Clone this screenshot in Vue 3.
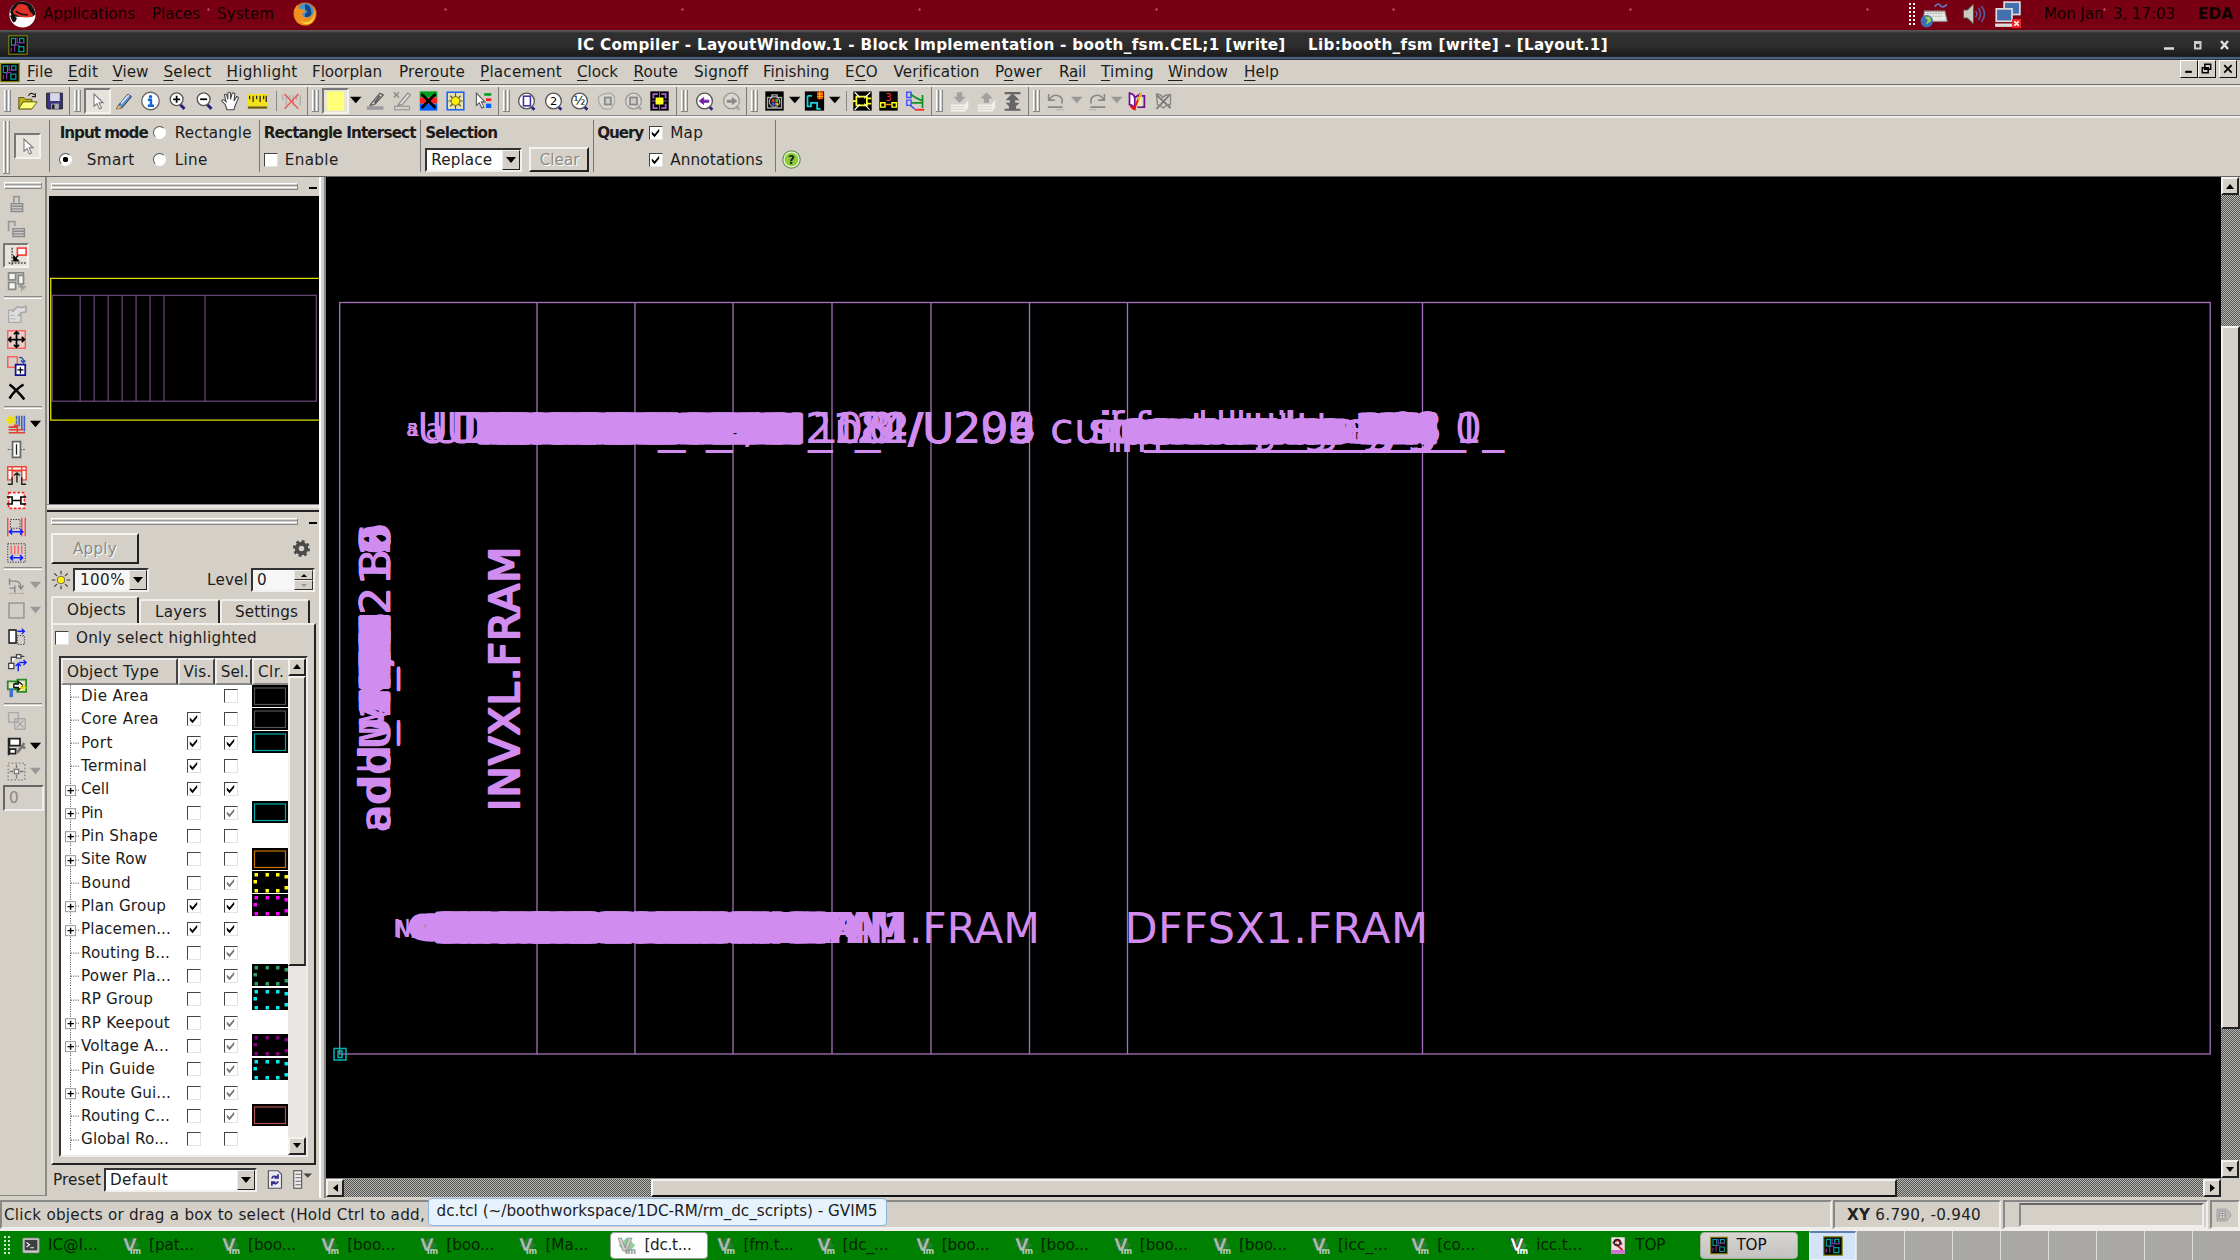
<script setup>
// Spreads the letters of a label so that it takes the given width.
const vFit = {
  mounted(el, { value }) {
    if (!value) return
    const natural = el.getBoundingClientRect().width
    el.style.letterSpacing = (value - natural) / el.textContent.length + 'px'
  },
}

const lens = '<path d="M15 16l5 5" stroke="#2a2080" stroke-width="3.4"/><circle cx="11" cy="10" r="7.3" fill="#fff" stroke="#555" stroke-width="1.5"/>'
const glass = '<path d="M17 18l4 4" stroke="#2a2080" stroke-width="3"/><circle cx="12" cy="12" r="9" fill="#fff" stroke="#555" stroke-width="1.5"/>'
const glassOff = '<path d="M17 18l4 4" stroke="#aaa" stroke-width="3"/><circle cx="12" cy="12" r="9" fill="#dcd9d2" stroke="#999" stroke-width="1.5"/>'
const chip = '<rect x="1" y="1" width="22" height="22" fill="#000" stroke="#84840a" stroke-width="1.4"/><path d="M4 4h5v8H4zM14 4h5v5h-5zM13 14h6v6h-6z" fill="none" stroke="#00a0a0" stroke-width="1.5"/><path d="M8 20v-8h6M11 3v6h9M4 20v-5" fill="none" stroke="#8030a0" stroke-width="1.5"/>'

const art = {
  chip,
  open: '<path d="M2 8h6l2 2h7v11H2z" fill="#b8b020" stroke="#555500"/><path d="M2 21l5-8h16l-6 8z" fill="#ffff80" stroke="#555500"/><path d="M13 6q3-5 7-1m1-2v4h-4" fill="none" stroke="#222" stroke-width="1.4"/>',
  save: '<path d="M3 3h18v18H4l-1-2z" fill="#3a3480" stroke="#111"/><rect x="7" y="3" width="11" height="9" fill="#d8d8e8"/><rect x="8" y="15" width="9" height="6" fill="#aaa"/><rect x="9" y="16" width="3" height="5" fill="#222"/>',
  arrow: '<path d="M8 4v14l3.4-3 2.8 6 2.4-1-2.8-6h4.6z" fill="#fff" stroke="#777" stroke-width="1.2"/>',
  pencil: '<path d="M5 17L16 4l4 3L9 20l-6 1z" fill="#5b8fd0" stroke="#222"/><path d="M8 15L17 5" stroke="#cfe2ff" stroke-width="2"/><path d="M3 21l2-4 4 3z" fill="#e8c060"/>',
  info: '<circle cx="12" cy="12" r="10" fill="#fff" stroke="#666" stroke-width="1.5"/><circle cx="12" cy="7" r="1.9" fill="#1168d8"/><path d="M9 10.500h3.500V17M9 17.500h7" fill="none" stroke="#1168d8" stroke-width="2.800"/>',
  zoomin: lens + '<path d="M7 10h8M11 6v8" stroke="#000" stroke-width="2"/>',
  zoomout: lens + '<path d="M7 10h8" stroke="#000" stroke-width="2"/>',
  hand: '<path d="M8 22l-2-6-4-4q1-3 4 0l1 1L5 5q2-2 3 1l1 4V3q2-2 3 0v7l2-7q2-1 3 1l-1 8 3-5q2 0 2 2l-4 9-1 4z" fill="#fff" stroke="#444" stroke-width="1.2"/>',
  ruler: '<rect x="1" y="4" width="22" height="14" fill="#f4e21a"/><path d="M1 19.500h22" stroke="#6b5d00" stroke-width="2.500"/><path d="M3 6v4M7 6v7M11 6v4M15 6v7M19 6v4M22 6v7" stroke="#222" stroke-width="1.4"/>',
  rulerx: '<path d="M2 5v6M6 5v12M10 5v6M14 5v12M18 5v6M22 5v12" stroke="#aaa" stroke-width="1.4"/><path d="M4 4l16 17M20 4L4 21" stroke="#f05050" stroke-width="1.6"/>',
  yellow: '<rect x="2" y="1" width="20" height="22" fill="#ffff78"/>',
  mark: '<rect x="2" y="18" width="19" height="4" fill="#999"/><path d="M7 15L17 3l4 2L11 16l-5 1z" fill="#ccc" stroke="#555" stroke-width="1.3"/><path d="M11 14l6-8" stroke="#555" stroke-width="2"/>',
  unmark: '<rect x="3" y="18" width="17" height="4" fill="none" stroke="#999" stroke-width="1.4"/><path d="M8 15L18 3l3 2L12 16l-5 1z" fill="#ddd" stroke="#888" stroke-width="1.3"/><path d="M2 2l6 6M8 2L2 8" stroke="#888" stroke-width="1.6"/>',
  rgb: '<rect x="2" y="1" width="20" height="7" fill="#00a020"/><rect x="2" y="8" width="20" height="7" fill="#ff2020"/><rect x="2" y="15" width="20" height="8" fill="#0060ff"/><path d="M4 4l16 16M20 4L4 20" stroke="#000" stroke-width="3"/>',
  sunbox: '<rect x="2.500" y="2" width="19" height="20" fill="#e8e4b0" stroke="#2060ff" stroke-width="1.8"/><path d="M12 3v18M4 12h16M6 6l12 12M18 6L6 18" stroke="#555" stroke-width="1.4"/><circle cx="12" cy="12" r="5" fill="#ffee10" stroke="#665500"/>',
  pick: '<path d="M14 3h8v3h-8z" fill="#00a020"/><path d="M16 9h6v3h-6z" fill="#ff2020"/><path d="M16 15h6v5h-6z" fill="#0060ff"/><path d="M5 3v14l3.400-3 2.800 6 2.400-1-2.800-6h4z" fill="#fff" stroke="#555" stroke-width="1.2"/>',
  gfit: glass + '<rect x="8.500" y="6.500" width="8" height="11" fill="#fff" stroke="#4030a0" stroke-width="1.800"/>',
  gtwo: glass + '<text x="12" y="17" font-size="13" text-anchor="middle" fill="#000">2</text>',
  ghalf: glass + '<text x="12" y="16.500" font-size="14" text-anchor="middle" fill="#000">½</text>',
  ghand: '<path d="M3 7q-1 9 6 14h8l4-7V7l-4-4-8 1z" fill="#dcd9d2" stroke="#aaa" stroke-width="1.500"/><rect x="10" y="8" width="7" height="8" fill="#ccc" stroke="#888" stroke-width="2"/>',
  gsel: glassOff + '<rect x="8" y="8" width="8" height="8" fill="#ccc" stroke="#888" stroke-width="2"/>',
  gfull: '<rect x="1.500" y="1" width="21" height="22" fill="#000"/><path d="M5 9V4h5M14 4h5v5M19 15v5h-5M10 20H5v-5" fill="none" stroke="#b060e0" stroke-width="2"/><path d="M12 2v20M3 12h18" stroke="#b060e0"/><rect x="7.500" y="8" width="9" height="8" fill="#ffff20"/>',
  gback: glass + '<path d="M6 12l5-4v3h6v2.500h-6V16z" fill="#7020a0" stroke="#7020a0"/>',
  gfwd: glassOff + '<path d="M18 12l-5-4v3H7v2.500h6V16z" fill="#888" stroke="#888"/>',
  cam: '<rect x="1.500" y="1" width="21" height="22" fill="#000"/><path d="M4 8h16v12H4zM9 5h6v3H9z" fill="none" stroke="#aaa" stroke-width="1.500"/><circle cx="12" cy="13" r="6" fill="#222" stroke="#ddd"/><path d="M9 10h3v3H9z" fill="#f33"/><path d="M13 10h3v3h-3z" fill="#3c3"/><path d="M9 14h3v3H9z" fill="#36f"/><path d="M13 14h3v3h-3z" fill="#fa0"/>',
  net: '<rect x="1" y="1" width="22" height="22" fill="#000"/><path d="M4 6v12h4v-4h7v7h4M4 6h5" fill="none" stroke="#10d8e0" stroke-width="2"/><rect x="15" y="1" width="7" height="9" fill="#e04000"/><path d="M15 4h7M15 7h7M18 1v9" stroke="#ffd000"/>',
  amp: '<rect x="1.500" y="1" width="21" height="22" fill="#000"/><path d="M5 7h12v10H5zM1 12h5M17 9h5M17 15h5" fill="none" stroke="#ffff20" stroke-width="2"/><path d="M3 2l6 6M21 2l-7 7M3 22l6-6M20 22l-6-7" stroke="#fff" stroke-width="1.300"/>',
  three: '<rect x="1.500" y="1" width="21" height="22" fill="#000"/><text x="12" y="12" font-size="11" text-anchor="middle" fill="#f33">3</text><path d="M3 14h5v5H3zM16 14h5v5h-5z" fill="none" stroke="#ffff20" stroke-width="1.600"/><path d="M8 16h8" stroke="#f90" stroke-width="1.600"/>',
  tree: '<path d="M6 4q8 6 15 8M7 14h13M20 5v15" fill="none" stroke="#109020" stroke-width="2"/><path d="M2 2h5v6H2zM2 11h5v6H2zM6 17l5 4" fill="none" stroke="#4050ff" stroke-width="1.600"/><path d="M11 22h11" stroke="#f22" stroke-width="2"/>',
  pushd: '<path d="M2 17h16l4-5M2 20h16l4-5M2 23h16l4-5" fill="none" stroke="#f4f2ee" stroke-width="1.800"/><path d="M9 2h6v5h4l-7 7-7-7h4z" fill="#a0a0a0"/>',
  pushu: '<path d="M2 17h16l4-5M2 20h16l4-5M2 23h16l4-5" fill="none" stroke="#f4f2ee" stroke-width="1.800"/><path d="M9 14h6V9h4l-7-7-7 7h4z" fill="#a0a0a0"/>',
  top: '<path d="M3 3h18M3 22h18" stroke="#666" stroke-width="2.500"/><path d="M12 3l8 8h-5v3h5l-4 4v3H8v-3l-4-4h5v-3H4z" fill="#666"/>',
  undo: '<path d="M3 4v7h7M4 10q4-6 10-4t4 9" fill="none" stroke="#888" stroke-width="1.800"/><path d="M2 19h17" stroke="#888" stroke-width="2"/><path d="M12 22h8" stroke="#999" stroke-dasharray="2 1"/>',
  redo: '<path d="M21 4v7h-7M20 10q-4-6-10-4t-4 9" fill="none" stroke="#888" stroke-width="1.800"/><path d="M5 19h17" stroke="#888" stroke-width="2"/><path d="M4 22h8" stroke="#999" stroke-dasharray="2 1"/>',
  book: '<path d="M4 3q5 1 6 5v12q-3-4-6-4z" fill="#fff" stroke="#701090" stroke-width="2"/><path d="M10 8l5-3v12M13 19h8V6h-3" fill="none" stroke="#701090" stroke-width="2"/><path d="M14 7h4v11h-5z" fill="#fff0a0"/><path d="M17 3L9 22M5 18l5 4" stroke="#f01010" stroke-width="2.200"/><path d="M17 3l-3 8" stroke="#e8c020" stroke-width="2"/>',
  nobook: '<path d="M4 5l16 15M20 4L4 21" stroke="#777" stroke-width="2"/><path d="M4 4q5 0 7 4 3-4 9-3v11q-5 0-8 4-3-3-7-4z" fill="none" stroke="#888" stroke-width="1.600"/>',
  lock: '<path d="M9 10V3h6v7" fill="none" stroke="#999" stroke-width="2"/><path d="M6 11h13v9H6zM7 14h12M7 17h12" fill="#ccc" stroke="#8a8a8a" stroke-width="1.600"/>',
  unlock: '<path d="M3 14V3h7v5" fill="none" stroke="#999" stroke-width="2"/><path d="M8 11h13v9H8zM8 14h13M8 17h13" fill="#ccc" stroke="#8a8a8a" stroke-width="1.600"/>',
  snap: '<path d="M7 3v20M3 20.500h20" stroke="#444" stroke-width="1.600" stroke-dasharray="2 1.500"/><rect x="13" y="3.500" width="10" height="8" fill="#fff" stroke="#f33" stroke-width="1.800"/><path d="M14 12l-3 3" stroke="#000" stroke-width="1.500"/><path d="M9 13v5h5z" fill="#000" stroke="#000" stroke-width="1.600"/>',
  tiles: '<path d="M3 2h8v8H3zM3 13h8v8H3zM14 5h6v10h-6z" fill="#f4f4f0" stroke="#888" stroke-width="2"/><path d="M2 2h18v3" fill="none" stroke="#888" stroke-width="1.500"/><path d="M18 14v9M14 18h9M15 15l6 6" stroke="#999" stroke-width="1.500"/>',
  wrench: '<path d="M3 7h14v14H3z" fill="#ddd" stroke="#aaa" stroke-width="1.500"/><path d="M7 9l6-6 4 1 6-1v6l-6 1-3 4" fill="#ddd" stroke="#aaa" stroke-width="2"/><path d="M5 13h5M5 17h6" stroke="#aaa"/>',
  move: '<rect x="2" y="2" width="20" height="20" fill="#e6cfc8" stroke="#f55" stroke-width="1.500"/><path d="M12 3v18M3 12h18M9 6l3-3 3 3M9 18l3 3 3-3M6 9l-3 3 3 3M18 9l3 3-3 3" fill="none" stroke="#000" stroke-width="2"/>',
  copy: '<rect x="2" y="2" width="11" height="12" fill="none" stroke="#f55" stroke-width="1.600"/><path d="M15 3q5-1 5 5M17 6l3 3 2-3" fill="none" stroke="#3050a0" stroke-width="1.600"/><rect x="11" y="11" width="11" height="12" fill="#fff" stroke="#111190" stroke-width="2"/><path d="M13 17h7M16.500 14v7" stroke="#000" stroke-width="1.500"/>',
  del: '<path d="M4 4q8 6 17 17M20 4Q10 10 4 20" fill="none" stroke="#000" stroke-width="2.800"/>',
  route: '<path d="M9 13h4v8M3 18h17M3 21.500h19M3 15h10" stroke="#e04030" stroke-width="1.800" fill="none"/><path d="M12 2v9M15 2v12M18 2v15M21 2v18" stroke="#4060c0" stroke-width="1.800"/><path d="M6 1v12M0 7h12M2 3l8 8M10 3l-8 8" stroke="#f0e000" stroke-width="2"/>',
  via: '<path d="M2 12h20" stroke="#444" stroke-dasharray="2 1.500"/><rect x="7.500" y="3" width="9" height="18" fill="#fff" stroke="#666" stroke-width="2"/><path d="M12 6v12" stroke="#222" stroke-width="1.500"/>',
  rise: '<path d="M2 2h21v15h-5V7H7v10H2zM2 6h21M7 2v15M18 2v15" fill="#fff" stroke="#e43" stroke-width="1.600"/><path d="M12.500 20V9M9 12l3.500-3 3.500 3M2 22h5v-8M23 22h-5v-8" fill="none" stroke="#222" stroke-width="1.600"/>',
  gap: '<rect x="3" y="3" width="18" height="18" fill="#fff" stroke="#f22" stroke-width="1.800" stroke-dasharray="3 2"/><path d="M1 8h6v8H1M23 8h-6v8h6M8 12h8" fill="none" stroke="#000" stroke-width="1.800"/>',
  span: '<path d="M2 2v21M22 2v21M18 2v21" stroke="#f44" stroke-width="1.600"/><rect x="5" y="4" width="11" height="10" fill="none" stroke="#222" stroke-dasharray="1.500 1.500"/><path d="M3 18h17M7 15l-3 3 3 3M16 15l3 3-3 3" fill="none" stroke="#1020ff" stroke-width="1.700"/>',
  span2: '<rect x="2" y="2" width="20" height="21" fill="none" stroke="#222" stroke-dasharray="1.500 1.500"/><path d="M6 4v10M10 4v10M14 4v10M18 4v10" stroke="#f66" stroke-width="1.600"/><path d="M5 18h14M8 15l-3 3 3 3M16 15l3 3-3 3" fill="none" stroke="#1020ff" stroke-width="1.700"/>',
  turn: '<path d="M4 7h7q6 0 6 8M14 12l3 4 3-4M4 15h7M4 4v7M10 12v8" fill="none" stroke="#888" stroke-width="1.600"/><path d="M4 21h17" stroke="#888" stroke-dasharray="1.500 1.500"/>',
  boxoff: '<rect x="3.500" y="3.500" width="17" height="17" fill="none" stroke="#999" stroke-width="1.800"/>',
  door: '<path d="M3.500 4.500h8v15h-8z" fill="#fff" stroke="#111" stroke-width="1.600"/><path d="M13 11h8v10h-8z" fill="none" stroke="#222" stroke-dasharray="1.500 1.500"/><path d="M13 6h8M18 3l3 3-3 3" fill="none" stroke="#1020ff" stroke-width="1.600"/>',
  hop: '<path d="M3 13h6v6H3zM12 3h5v4h-5zM6 13V6h6M17 5h4" fill="#fff" stroke="#444" stroke-width="1.500"/><path d="M14 22v-8M11 16l3-3 3 3M15 12h8M20 9l3 3-3 3" fill="none" stroke="#1020ff" stroke-width="1.600"/>',
  swap: '<path d="M2 5h9v9H2zM13 3h10v14H13z" fill="#e8e8c8" stroke="#2a8a2a" stroke-width="2"/><path d="M9 8h5V5l6 5-6 5v-3H9z" fill="#fff" stroke="#111" stroke-width="1.600"/><path d="M6 13v10" stroke="#4070d0" stroke-width="4"/><path d="M20 8v8M16 12h7" stroke="#f0e000" stroke-width="2"/>',
  group: '<path d="M3 3h11v11H3zM10 10h12v12H10z" fill="#d4d0c8" stroke="#aaa" stroke-width="1.600"/><path d="M12 12l8 8M20 12l-8 8" stroke="#aaa" stroke-width="1.400"/>',
  flag: '<path d="M3 2v20M4 3h12v8H4zM4 15h7v5H4z" fill="#fff" stroke="#222" stroke-width="2"/><path d="M21 8l-8 11M18 12l4 2" stroke="#777" stroke-width="3"/>',
  spread: '<rect x="2.500" y="2.500" width="19" height="19" fill="none" stroke="#888" stroke-width="1.500" stroke-dasharray="2 2"/><rect x="9.500" y="9.500" width="5" height="5" fill="#eee" stroke="#777" stroke-width="1.500"/><path d="M12 4v4M12 16v4M4 12h4M16 12h4" stroke="#777" stroke-width="1.500"/>',
  help: '<circle cx="12" cy="12" r="11" fill="#8ccc3c" stroke="#6b8a5a" stroke-width="1.500"/><circle cx="12" cy="12" r="9.400" fill="none" stroke="#e6f6d0" stroke-width="1.500"/><text x="12" y="17.500" font-size="15" font-weight="700" text-anchor="middle" fill="#222">?</text>',
  gear: '<circle cx="12" cy="12" r="6" fill="none" stroke="#4a4a4a" stroke-width="5"/><circle cx="12" cy="12" r="9.300" fill="none" stroke="#4a4a4a" stroke-width="3" stroke-dasharray="3.650 3.650"/>',
  sun: '<path d="M12 1v22M1 12h22M4 4l16 16M20 4L4 20" stroke="#333" stroke-width="1.300"/><circle cx="12" cy="12" r="7" fill="#d4d0c8"/><circle cx="12" cy="12" r="4.600" fill="#ffee10" stroke="#555"/>',
  reload: '<path d="M5 2h11l4 4v16H5z" fill="#e8eaf0" stroke="#555" stroke-width="1.300"/><path d="M9 11q1-4 6-2M16 6v4h-4M16 14q-1 4-6 2M9 19v-4h4" fill="none" stroke="#3a3090" stroke-width="2"/>',
  list: '<rect x="2" y="2" width="9" height="20" fill="#eee" stroke="#555" stroke-width="1.300"/><path d="M4 6h6M4 10h6M4 14h6M4 18h6" stroke="#555"/><path d="M13 5h10l-5 5z" fill="#444"/>',
  doc: '<path d="M2 4h13l6 8-6 8H2z" fill="#bbb" stroke="#999"/><path d="M5 7h8v10H5zM5 10h8M5 13h8M9 7v10" fill="#ddd" stroke="#888"/>',
  term: '<rect x="1" y="2" width="22" height="20" rx="1.500" fill="#ccc" stroke="#777"/><rect x="3.500" y="4.500" width="17" height="14" fill="#3c4040"/><path d="M6 8l4 3-4 3M11 15h5" fill="none" stroke="#eee" stroke-width="1.500"/>',
  vim: '<path d="M12 1l11 11-11 11L1 12z" fill="#1f7f30"/><text x="0" y="19" font-size="24" font-weight="700" fill="#a8bfa8" stroke="#305030" stroke-width=".6">V</text><text x="9" y="23" font-size="11" font-weight="700" fill="#b8c8b8">im</text>',
  vimw: '<path d="M12 1l11 11-11 11L1 12z" fill="#2c8f3a"/><text x="0" y="19" font-size="24" font-weight="700" fill="#fff" stroke="#111" stroke-width=".8">V</text><text x="9" y="23" font-size="11" font-weight="700" fill="#fff">im</text>',
  vima: '<path d="M12 1l11 11-11 11L1 12z" fill="#8fd09a"/><text x="0" y="19" font-size="24" font-weight="700" fill="#d0d0d0" stroke="#777" stroke-width=".8">V</text><text x="9" y="23" font-size="11" font-weight="700" fill="#999">im</text>',
  top1: '<rect x="3" y="1" width="18" height="22" fill="#f4dce8"/><path d="M3 18h18v5H3z" fill="#d070d0"/><path d="M9 10l9 8M5 9q8-9 12 2" fill="none" stroke="#d02020" stroke-width="2.500"/><circle cx="11" cy="8" r="4" fill="none" stroke="#222" stroke-width="2"/>',
  hat: '<circle cx="12" cy="12" r="11.600" fill="#fff"/><path d="M1 10Q3 0 12 .4 22 1 23.600 12q-3 3-9 2L3 14z" fill="#111"/><path d="M5 7l3-4q4-1 8 1l3 6q3 1 2 4-8 2-16-2-3-3 0-5z" fill="#e03028"/><path d="M6 9q5 4 11 3" fill="none" stroke="#111" stroke-width="1.300"/><path d="M1 13q1 4 3 6l2-1 1-3-4-3z" fill="#111"/>',
  fox: '<circle cx="12" cy="12" r="11.500" fill="#e87511"/><circle cx="12.500" cy="9.500" r="8.300" fill="#3f95d8"/><path d="M12 2q6 1 6 7 2 6-6 6-1-4 3-5-4-3-3-8z" fill="#16457f"/><path d="M1 8l3-5 3 4q6 0 5 3l-3 2q2 5 8 3 5-3 3-11 4 4 2.500 10-3 9-11 9Q1 22 1 8z" fill="#f0901e"/><path d="M21 6q2 9-4 13-6 3-10-1 3 5 9 4 8-4 5-16z" fill="#fbd33c"/>',
  kbd: '<path d="M13 5q3-4 5-1t6-1" fill="none" stroke="#6070c0" stroke-width="1.500"/><path d="M4 9h18l2 9H3z" fill="#e8e8e4" stroke="#999"/><path d="M6 11h15M6 13.500h15" stroke="#aaa" stroke-dasharray="1.500 1"/><circle cx="6" cy="18" r="5.500" fill="#3c6eb4"/><path d="M4 14l3 3-2 4 5-3-1-4z" fill="#9fcf50"/>',
  spk: '<path d="M2 8h4l6-6v20l-6-6H2z" fill="#c8ccc0" stroke="#555"/><path d="M14 9q3 3 0 6M17 6q4 6 0 12M20 4q6 8 0 16" fill="none" stroke="#5a5fa0" stroke-width="1.500"/>',
  pcs: '<rect x="9" y="1" width="14" height="11" fill="#4470b0" stroke="#ddd" stroke-width="1.500"/><rect x="2" y="7" width="14" height="11" fill="#4470b0" stroke="#ddd" stroke-width="1.500"/><path d="M1 20h16v3H1z" fill="#ddd"/><rect x="16" y="16" width="8" height="8" fill="#e22"/><path d="M18 18l4 4M22 18l-4 4" stroke="#fff" stroke-width="1.500"/>',
  dd: '<path d="M1 7h12l-6 7z" fill="#000"/>',
  ddoff: '<path d="M1 7h12l-6 7z" fill="#999"/>',
}

const menus = [
  ['', 'F', 'ile', 41, 26], ['', 'E', 'dit', 44.5, 30], ['', 'V', 'iew', 51, 36], ['', 'S', 'elect', 63, 48],
  ['', 'H', 'ighlight', 85.500, 71], ['F', 'l', 'oorplan', 87, 70], ['Prer', 'o', 'ute', 81, 66], ['', 'P', 'lacement', 97, 82],
  ['', 'C', 'lock', 56.500, 41], ['', 'R', 'oute', 60.500, 44.500], ['Sign', 'o', 'ff', 69, 54], ['Fi', 'n', 'ishing', 82, 66.500],
  ['E', 'C', 'O', 48.500, 33], ['Ver', 'i', 'fication', 101.500, 86], ['P', 'o', 'wer', 64, 47], ['R', 'a', 'il', 42, 27],
  ['', 'T', 'iming', 67, 53], ['', 'W', 'indow', 76, 60], ['', 'H', 'elp', 60, 35],
]

const groups = [
  { w: 70, items: ['open', 'save'] },
  { w: 238, items: ['*arrow', 'pencil', 'info', 'zoomin', 'zoomout', 'hand', 'ruler', '|', 'rulerx'] },
  { w: 191, items: ['*yellow', 'dd', 'mark', 'unmark', 'rgb', 'sunbox', 'pick'] },
  { w: 178, items: ['gfit', 'gtwo', 'ghalf', 'ghand', 'gsel', 'gfull'] },
  { w: 70, items: ['gback', 'gfwd'] },
  { w: 185, items: ['cam', 'dd', 'net', 'dd', '|', 'amp', 'three', 'tree'] },
  { w: 97, items: ['pushd', 'pushu', 'top'] },
  { w: 160, items: ['undo', 'ddoff', 'redo', 'ddoff', 'book', 'nobook'] },
]
const name = (s) => s.replace('*', '')

const side = [
  ['lock'], ['unlock'], ['snap', '', true], ['tiles'], ['-'], ['wrench'], ['move'], ['copy'], ['del'], ['-'],
  ['route', 'dd'], ['via'], ['rise'], ['gap'], ['span'], ['span2'], ['-'], ['turn', 'ddoff'], ['boxoff', 'ddoff'],
  ['door'], ['hop'], ['swap'], ['-'], ['group'], ['flag', 'dd'], ['spread', 'ddoff'],
]

// name, width, expandable, visible, selectable (0 off, 1 on, 2 grey, null none), swatch colour, dotted swatch
const rows = [
  ['Die Area', 68, 0, null, 0, '#555'], ['Core Area', 78, 0, 1, 0, '#555'], ['Port', 32, 0, 1, 1, '#0aa'],
  ['Terminal', 66, 0, 1, 0], ['Cell', 28, 1, 1, 1], ['Pin', 22, 1, 0, 2, '#0aa'], ['Pin Shape', 77, 1, 0, 0],
  ['Site Row', 66, 1, 0, 0, '#c87800'], ['Bound', 50, 0, 0, 2, '#ff0', 1], ['Plan Group', 85, 1, 1, 1, '#f0f', 1],
  ['Placemen...', 90, 1, 1, 1], ['Routing B...', 89, 0, 0, 2], ['Power Pla...', 90, 0, 0, 2, '#2e9e60', 1],
  ['RP Group', 72, 0, 0, 0, '#0ee', 1], ['RP Keepout', 89, 1, 0, 2], ['Voltage A...', 88, 1, 0, 2, '#800080', 1],
  ['Pin Guide', 74, 0, 0, 2, '#0ee', 1], ['Route Gui...', 90, 1, 0, 2], ['Routing C...', 89, 0, 0, 2, '#b05050'],
  ['Global Ro...', 88, 0, 0, 0],
]
const dots = [[3, 3], [14, 3], [24.500, 3], [33, 5], [2, 10], [33, 16], [3, 19], [14, 19], [24.500, 19]]

const tasks = [
  ['[pat...', 'vim', 45], ['[boo...', 'vim', 48], ['[boo...', 'vim', 48], ['[boo...', 'vim', 48], ['[Ma...', 'vim', 43],
  ['[dc.t...', 'vima', 47, 'on'], ['[fm.t...', 'vim', 50], ['[dc_...', 'vim', 46], ['[boo...', 'vim', 48],
  ['[boo...', 'vim', 48], ['[boo...', 'vim', 48], ['[boo...', 'vim', 48], ['[icc_...', 'vim', 50], ['[co...', 'vim', 38],
  ['icc.t...', 'vimw', 46], ['TOP', 'top1', 30], ['TOP', 'chip', 30, 'sel'],
]

const cellEdges = [537, 635, 733, 832, 931, 1029.500, 1127.500, 1422.500]
const navEdges = [80, 94, 108, 122, 136, 150, 164, 205]

// Instance and reference names, piled up where the cells share one origin.
// put: one name from x1 to x2. pile: the dense part, drawn with heavy strokes.
const labels = []
const put = (x, x2, t, y = 443, s = 43) => labels.push({ x, y, t, s, l: x2 ? x2 - x : null })
const pile = (x, x2, t, y = 441.500, s = 38) => labels.push({ x, y, t, s, l: x2 - x, heavy: 1 })

put(406, 420, 'a1', 436, 17)
put(407, 421, 'B', 436, 17)
put(417, 0, 'U')
put(431, 0, 'U')
put(425, 0, 'a', 440, 30)
put(446, 0, 'U')
put(452, 0, 'DN')
put(462, 0, 'DP')
pile(478, 804, 'NBMEHBNMEBHN')
pile(484, 800, 'MHBENMBHNEMB')
pile(476, 680, 'HNMBEHMB')
pile(490, 660, 'EBHMNEH')
pile(660, 802, 'NMHBN')
put(658, 0, '_')
put(664, 0, '_')
put(706, 0, '_')
put(711, 0, '_')
put(745, 0, '/')
put(808, 0, '_')
put(811, 0, '_')
put(805, 0, '2')
put(811, 0, '1')
put(832, 0, '1')
put(834, 0, 'n')
put(836, 0, '0')
put(855, 0, '_')
put(859, 0, '_')
put(856, 0, '2')
put(860, 0, '8')
put(863, 0, 'B')
put(868, 0, '0')
put(881, 1036, '4/U294')
put(880, 1035, '4/U200')
put(881, 1036, '4/U298')
put(883, 1034, '2/U295')
put(1008, 0, '6')

put(1050, 1504, 'current_state_reg_0_')
put(1050, 1504, 'current_state_reg_1_')
put(1088, 1440, 'sineu_reg_state_8')
put(1098, 1440, 'ipeproduct_areg06')
put(1101, 1441, 'ifpwo_load_areg38')
put(1112, 1442, 'pfemuotpicane_y_8')
put(1122, 1440, 'piroduct_dagaa_38')
put(1092, 1436, 'sumeu_laten_aaeg')
put(1136, 1438, 'pwounusagaeyreg')
pile(1124, 1345, 'aewmaswea', 441.500, 38)
pile(1150, 1345, 'ewaenmaw', 441.500, 38)
pile(1358, 1438, 'BMH')
pile(1364, 1434, 'HBN')
put(1144, 1466, '_______________')

put(393, 437, 'NAM', 937, 24)
put(395, 440, 'MX', 938, 25)
pile(410, 470, 'OMO', 938, 30)
pile(414, 470, 'GNG', 939, 32)
pile(440, 832, 'NBMEHBNMEBHNMB', 941, 38)
pile(446, 828, 'MHBENMBHNEMBHN', 941, 38)
pile(438, 780, 'HNMBEHMBHNEB', 941, 38)
pile(434, 720, 'EBHMNEHBNEM', 941, 38)
put(740, 905, 'NX1.FRAM', 943, 42.500)
put(738, 890, 'X1.FRAM', 943, 42.500)
put(746, 872, 'HFRAMI', 943, 42.500)
put(750, 856, 'MFRAM', 943, 42.500)
put(760, 908, 'AOI.FRAM', 943, 42.500)
put(882, 1040, '1.FRAM', 943, 42.500)
put(1124.500, 1428, 'DFFSX1.FRAM', 943, 43)

const upright = []
const up = (y, y2, t, heavy) => upright.push({ y, l: y2 ? y - y2 : null, t, heavy })
up(832, 528, 'add_1_/U212')
up(831, 527, 'sdd_4_/U218')
up(833, 528, 'adb_1_/U216')
up(830, 527, 'add_4_/U210')
up(750, 700, 'UM')
up(748, 700, 'UW')
up(704, 614, 'NBM', 1)
up(690, 614, 'MHB', 1)
up(668, 614, 'BN', 1)
up(577, 0, '8')
up(578, 0, 'B')
up(551, 0, '0')
up(550, 0, '6')
</script>

<template>
  <div class="desk">
    <header class="panel">
      <svg class="hat" viewBox="0 0 24 24" v-html="art.hat"></svg>
      <span class="apps"><span v-fit="92">Applications</span></span>
      <span class="places"><span v-fit="48">Places</span></span>
      <span class="system"><span v-fit="57">System</span></span>
      <svg class="fox" viewBox="0 0 24 24" v-html="art.fox"></svg>
      <div class="grow"></div>
      <i class="grip"></i>
      <svg class="tray kb" viewBox="0 0 24 24" v-html="art.kbd"></svg>
      <svg class="tray sp" viewBox="0 0 24 24" v-html="art.spk"></svg>
      <svg class="tray pc" viewBox="0 0 24 24" v-html="art.pcs"></svg>
      <span class="clock"><span v-fit="131">Mon Jan&nbsp; 3, 17:03</span></span>
      <b class="user"><span v-fit="35">EDA</span></b>
    </header>

    <div class="title">
      <svg class="ico" viewBox="0 0 24 24" v-html="art.chip"></svg>
      <b class="cap"><span v-fit="1031">IC Compiler - LayoutWindow.1 - Block Implementation - booth_fsm.CEL;1 [write]&nbsp;&nbsp;&nbsp; Lib:booth_fsm [write] - [Layout.1]</span></b>
      <svg class="wm" viewBox="0 0 76 29"><path d="M4 17.500h10" stroke="#ddd" stroke-width="2.500" /><path d="M35 11h5.500v6.500H35zM35 12h5" fill="none" stroke="#ccc" stroke-width="2" /><path d="M61 10l7 8M68 10l-7 8" stroke="#ddd" stroke-width="2.500" /></svg>
    </div>

    <nav class="menu">
      <svg class="ico" viewBox="0 0 24 24" v-html="art.chip"></svg>
      <span v-for="(m, i) in menus" :key="i" class="mi" :style="{ width: m[3] + 'px' }"><span v-fit="m[4]">{{ m[0] }}<u>{{ m[1] }}</u>{{ m[2] }}</span></span>
      <div class="grow"></div>
      <i class="mdi"><svg viewBox="0 0 18 18"><path d="M5 13h8" stroke="#000" stroke-width="2.500" /></svg></i>
      <i class="mdi"><svg viewBox="0 0 18 18"><path d="M7 4h7v6h-7zM4 8h7v6H4z" fill="#d4d0c8" stroke="#000" stroke-width="1.800" /></svg></i>
      <i class="mdi last"><svg viewBox="0 0 18 18"><path d="M5 5l9 9M14 5l-9 9" stroke="#000" stroke-width="2" /></svg></i>
    </nav>

    <div class="tools">
      <div v-for="(g, i) in groups" :key="i" class="tg" :style="{ width: g.w + 'px' }">
        <i class="hd"></i>
        <template v-for="(it, j) in g.items" :key="j">
          <i v-if="it === '|'" class="vs"></i>
          <svg v-else-if="it.startsWith('dd')" class="dd" viewBox="0 0 14 22" v-html="art[it]"></svg>
          <span v-else class="tb" :class="{ down: it[0] === '*' }"><svg viewBox="0 0 24 24" v-html="art[name(it)]"></svg></span>
        </template>
      </div>
    </div>

    <div class="opts">
      <i class="hd tall"></i>
      <span class="tb down big"><svg viewBox="0 0 24 24" v-html="art.arrow"></svg></span>
      <div class="col c1">
        <div class="ln"><b v-fit="88">Input mode</b></div>
        <div class="ln"><i class="radio on"></i><span v-fit="48">Smart</span></div>
      </div>
      <div class="col c2">
        <div class="ln"><i class="radio"></i><span v-fit="77">Rectangle</span></div>
        <div class="ln"><i class="radio"></i><span v-fit="33">Line</span></div>
      </div>
      <div class="col c3">
        <div class="ln"><b v-fit="152">Rectangle Intersect</b></div>
        <div class="ln"><i class="cb"></i><span v-fit="54">Enable</span></div>
      </div>
      <div class="col c4">
        <div class="ln"><b v-fit="72">Selection</b></div>
        <div class="ln"><div class="combo rep"><span v-fit="61">Replace</span><i class="dn"></i></div><div class="btn clr"><span v-fit="40">Clear</span></div></div>
      </div>
      <div class="col c5">
        <div class="ln"><b v-fit="46">Query</b></div>
      </div>
      <div class="col c6">
        <div class="ln"><i class="cb"><svg viewBox="0 0 14 14"><path d="M3 6l3 3 5-6v3l-5 6-3-3z" /></svg></i><span v-fit="33">Map</span></div>
        <div class="ln"><i class="cb"><svg viewBox="0 0 14 14"><path d="M3 6l3 3 5-6v3l-5 6-3-3z" /></svg></i><span v-fit="93">Annotations</span></div>
      </div>
      <div class="col c7">
        <div class="ln"></div>
        <div class="ln"><svg class="help" viewBox="0 0 24 24" v-html="art.help"></svg></div>
      </div>
    </div>

    <div class="main">
      <aside class="side">
        <i class="hh sh"></i>
        <template v-for="(s, i) in side" :key="i">
          <i v-if="s[0] === '-'" class="hs"></i>
          <div v-else class="sb">
            <span :class="{ down: s[2] }"><svg viewBox="0 0 24 24" v-html="art[s[0]]"></svg></span>
            <svg v-if="s[1]" class="dd" viewBox="0 0 14 22" v-html="art[s[1]]"></svg>
          </div>
        </template>
        <div class="zero">0</div>
      </aside>

      <section class="dock">
        <div class="dh"><i class="hh"></i><i class="min"></i></div>
        <svg class="nav" viewBox="49 196 270 308">
          <g fill="none" stroke="#6c487c" stroke-width="1.200">
            <rect x="52" y="295.500" width="264.500" height="106" />
            <path v-for="x in navEdges" :key="x" :d="`M${x} 296V402`" />
          </g>
          <path d="M319 278.500H50.500V420.500H319" fill="none" stroke="#dede00" stroke-width="1.300" />
        </svg>
        <i class="split"></i>
        <div class="dh second"><i class="hh"></i><i class="min"></i></div>
        <div class="r1"><div class="btn apply"><span v-fit="44">Apply</span></div><svg class="gear" viewBox="0 0 24 24" v-html="art.gear"></svg></div>
        <div class="r2">
          <svg class="sun" viewBox="0 0 24 24" v-html="art.sun"></svg>
          <div class="combo pct"><span v-fit="45">100%</span><i class="dn"></i></div>
          <span class="lv"><span v-fit="41">Level</span></span>
          <div class="combo spin"><span>0</span><em><i></i><i></i></em></div>
        </div>
        <div class="tabs">
          <div class="tab t1"><span v-fit="59">Objects</span></div>
          <div class="tab t2"><span v-fit="52">Layers</span></div>
          <div class="tab t3"><span v-fit="63">Settings</span></div>
        </div>
        <div class="page">
          <div class="only"><i class="cb"></i><span v-fit="181">Only select highlighted</span></div>
          <div class="table">
            <div class="tbl">
              <div class="th"><span class="a"><span v-fit="92">Object Type</span></span><span class="b"><span v-fit="28">Vis.</span></span><span class="b"><span v-fit="28">Sel.</span></span><span class="d"><span v-fit="26">Clr.</span></span></div>
              <div class="body">
                <div v-for="(r, i) in rows" :key="i" class="tr">
                  <span class="tw"><svg viewBox="0 0 20 23"><path d="M9.500 0V23M10 12h8" stroke="#444" stroke-dasharray="1 1.300" /><g v-if="r[2]"><rect x="4.500" y="7.500" width="10" height="10" fill="#fff" stroke="#999" /><path d="M6.500 12.500h6.400M9.600 9.500v6.200" stroke="#000" stroke-width="1.400" /></g></svg></span>
                  <span class="nm"><span v-fit="r[1]">{{ r[0] }}</span></span>
                  <span v-for="k in [3, 4]" :key="k" class="ck"><i v-if="r[k] !== null" class="cb"><svg v-if="r[k]" viewBox="0 0 14 14" :class="{ grey: r[k] === 2 }"><path d="M3 6l3 3 5-6v3l-5 6-3-3z" /></svg></i></span>
                  <span class="sw"><svg v-if="r[5]" viewBox="0 0 36 23">
                    <rect width="36" height="22" fill="#000" />
                    <template v-if="r[6]"><rect v-for="(d, j) in dots" :key="j" :x="d[0] - 0.500" :y="d[1] - 1" width="3.500" height="3.500" :fill="r[5]" /></template>
                    <rect v-else x="2.500" y="3" width="31" height="16.500" fill="none" :stroke="r[5]" stroke-width="1.200" />
                  </svg></span>
                </div>
              </div>
            </div>
            <div class="vbar"><i class="ar up"></i><i class="thumb"></i><i class="rest"></i><i class="ar"></i></div>
          </div>
        </div>
        <div class="preset"><span class="pl"><span v-fit="48">Preset</span></span><div class="combo def"><span v-fit="58">Default</span><i class="dn"></i></div><svg class="p1" viewBox="0 0 24 24" v-html="art.reload"></svg><svg class="p2" viewBox="0 0 24 24" v-html="art.list"></svg></div>
      </section>

      <section class="view">
        <div class="vrow">
          <svg class="canvas" viewBox="326 177 1895 1001">
            <g fill="none" stroke="#a571bb" stroke-width="1.300">
              <rect x="339.700" y="302.500" width="1870.500" height="751.500" />
              <path v-for="x in cellEdges" :key="x" :d="`M${x} 302V1054`" />
            </g>
            <g class="names">
              <text v-for="(l, i) in labels" :key="i" :x="l.x" :y="l.y" :font-size="l.s" :textLength="l.l" lengthAdjust="spacing" :class="{ heavy: l.heavy }">{{ l.t }}</text>
              <text v-for="(l, i) in upright" :key="'u' + i" :font-size="l.heavy ? 38 : 43" :textLength="l.l" :class="{ heavy: l.heavy }" :transform="`translate(${l.heavy ? 387.5 : 389.5} ${l.y}) rotate(-90)`">{{ l.t }}</text>
              <text class="semi" font-size="41.500" textLength="264" transform="translate(518.500 811) rotate(-90)">INVXL.FRAM</text>
            </g>
            <g fill="none" stroke="#00b4b4" stroke-width="1.500"><rect x="334" y="1048.500" width="12" height="11.500" /><rect x="338" y="1051" width="4" height="6.500" /></g>
          </svg>
          <div class="vs2"><i class="ar up"></i><i class="t0"></i><i class="th2"></i><i class="t1b"></i><i class="ar"></i></div>
        </div>
        <div class="hs2"><i class="ar lf"></i><i class="h0"></i><i class="hth"></i><i class="h1"></i><i class="ar rt"></i></div>
      </section>
    </div>

    <div class="status">
      <div class="s1"><span v-fit="421">Click objects or drag a box to select (Hold Ctrl to add,</span> S</div>
      <div class="s2"><span v-fit="134"><b>XY</b> 6.790, -0.940</span></div>
      <div class="s3"><i></i></div>
      <div class="s4"><svg viewBox="0 0 24 24" v-html="art.doc"></svg></div>
      <div class="tip"><span v-fit="441">dc.tcl (~/boothworkspace/1DC-RM/rm_dc_scripts) - GVIM5</span></div>
    </div>

    <footer class="tasks">
      <i class="grip"></i>
      <div class="task first"><svg viewBox="0 0 24 24" v-html="art.term"></svg><span v-fit="50">IC@I...</span></div>
      <div v-for="(t, i) in tasks" :key="i" class="task" :class="t[3]"><svg viewBox="0 0 24 24" v-html="art[t[1]]"></svg><span v-fit="t[2]">{{ t[0] }}</span></div>
      <div class="ws"><span class="act"><svg viewBox="0 0 24 24" v-html="art.chip"></svg></span><span v-for="n in 8" :key="n"></span></div>
    </footer>
  </div>
</template>

<style>
body { background: #d4d0c8; overflow: hidden; }
svg { display: block; overflow: visible; }
</style>

<style scoped>
.desk { width: 2240px; height: 1260px; display: flex; flex-direction: column; background: #d4d0c8; font: 15.2px/20px "DejaVu Sans", sans-serif; color: #1c1c1c; white-space: nowrap; overflow: hidden; }
.desk * { box-sizing: border-box; }
i { display: block; font-style: normal; flex: none; }
svg { flex: none; }
.grow { flex: 1; }
.panel { height: 30px; flex: none; display: flex; align-items: center; color: #100; background-color: #780012; background-image: radial-gradient(circle, #c04060 1px, transparent 1.5px), radial-gradient(circle, #b04058 1px, transparent 1.5px); background-size: 173px 61px, 237px 47px; background-position: 20px 2px, 90px -14px; padding-bottom: 2px; }
.hat { width: 27px; height: 27px; margin-left: 9px; }
.apps { margin-left: 7px; width: 109px; }
.places { width: 65px; }
.system { width: 76px; }
.fox { width: 24px; height: 24px; margin-top: -1px; }
.grip { width: 6px; height: 22px; background: repeating-linear-gradient(#fff 0 2px, transparent 2px 4px); -webkit-mask: linear-gradient(90deg, #000 2px, transparent 2px 4px, #000 4px); }
.tray { width: 27px; height: 27px; }
.kb { margin-left: 5px; }
.sp { margin-left: 13px; height: 24px; }
.pc { margin-left: 7px; }
.clock { margin-left: 23px; width: 154px; }
.user { width: 42px; }
.title { height: 30px; flex: none; display: flex; align-items: center; background: linear-gradient(#555 0, #555 1px, #303030 3px, #2e2e2e 50%, #1a1a1a 88%, #4a6488 92%, #4a6488 96%, #333 97%); color: #fff; }
.title .ico { width: 20px; height: 20px; margin-left: 8px; }
.cap { width: 1031px; margin-left: 549px; }
.wm { width: 76px; height: 29px; margin-left: 552px; }
.menu { height: 25px; flex: none; display: flex; align-items: flex-start; border-bottom: 1px solid #6e6c68; }
.menu .ico { width: 20px; height: 21px; margin-right: 7px; margin-top: 2px; }
.mi { padding-top: 1.5px; flex: none; }
.mi u { text-underline-offset: 3px; }
.mdi { width: 18px; height: 18px; border: 1.5px solid; border-color: #fff #111 #111 #fff; }
.mdi.last { margin: 0 3px 0 3px; }
.mdi svg { width: 15px; height: 15px; }
.tools { height: 31px; flex: none; display: flex; border-top: 2px solid #eceae6; border-bottom: 1px solid #888; }
.tg { flex: none; display: flex; align-items: center; border-right: 1.5px solid #7c7a76; padding: 0 0 1px 4px; height: 28px; overflow: hidden; }
.tg:last-child { border-right: 0; }
.hd { width: 7px; height: 22px; margin-right: 3px; border: solid #888; border-width: 0 1px 1px 0; background: linear-gradient(90deg, #fff 0 1px, #d4d0c8 1px 2px, #888 2px 3px, #fff 4px 5px, #d4d0c8 5px); }
.tb { width: 26.7px; height: 26px; flex: none; display: flex; align-items: center; justify-content: center; }
.tb svg { width: 21px; height: 22px; }
.down { background: #e6e3dd; border: 2px solid; border-color: #777 #f4f2ee #f4f2ee #777; }
.dd { width: 13.5px; height: 21px; }
.vs { width: 6px; height: 20px; border-right: 1px solid #888; margin-right: 1.5px; }
.opts { height: 61px; flex: none; display: flex; border-top: 2px solid #f0eeea; border-bottom: 1.5px solid #666; padding: 0 0 0 3px; }
.hd.tall { height: 53px; margin: 3px 4px 0 0; }
.big { margin-top: 15px; }
.col { flex: none; margin-top: 2px; height: 52px; }
.ln { height: 27px; display: flex; align-items: center; margin-top: -1px; }
.ln + .ln { margin-top: 0; }
.c1 { width: 104px; border-left: 1px solid #777; margin-left: 8px; padding-left: 10px; }
.c1 .radio { margin-right: 15px; margin-left: -1px; }
.c2 { width: 106px; }
.radio { width: 13px; height: 13px; border-radius: 50%; background: #fff; border: 1.5px solid; border-color: #555 #fff #fff #555; margin-right: 9px; }
.radio.on { background: radial-gradient(circle, #000 2.5px, #fff 3px); }
.c3, .c4, .c5, .c7 { border-left: 1px solid #777; padding-left: 4px; }
.c3 { width: 161.5px; }
.c3 .cb { margin-right: 6px; }
.c4 { width: 173px; }
.c5 { width: 55px; padding-left: 3px; }
.c6 { width: 127px; }
.c7 { padding-left: 6px; }
.cb { width: 14px; height: 14px; background: #fff; border: 1.5px solid; border-color: #444 #e4e2dc #e4e2dc #444; }
.cb svg { width: 13px; height: 13px; margin-left: -1px; margin-top: -1px; }
.cb .grey { fill: #777; }
.ln .cb { margin-right: 7px; }
.c6 .cb { margin-left: 1px; }
.help { width: 19px; height: 21px; }
.combo { display: flex; align-items: center; height: 24px; background: #fff; border: 2px solid; border-color: #333 #f2f0ec #f2f0ec #333; padding-left: 4px; flex: none; }
.combo > span { flex: none; }
.combo .dn { width: 18px; height: 20px; background: #d4d0c8; border: 1.5px solid; border-color: #eee #222 #222 #eee; display: flex; align-items: center; justify-content: center; margin-left: auto; }
.dn::before { content: ""; border: 5px solid transparent; border-top: 6px solid #000; border-bottom: 0; }
.btn { border: 2px solid; border-color: #f4f2ee #222 #222 #f4f2ee; display: flex; align-items: center; justify-content: center; color: #8c8a86; text-shadow: 1px 1px #fff; flex: none; }
.rep { width: 97px; }
.clr { width: 60px; height: 25px; margin-left: 6.5px; padding-left: 2px; }
.main { height: 1021px; flex: none; display: flex; }
.side { width: 47px; flex: none; height: 1019px; border-right: 2px solid #8c8a85; border-bottom: 1.5px solid #8c8a85; padding: 5px 0 0 3px; }
.hh { height: 7px; border: 1px solid; border-color: #fff #888 #888 #fff; background: linear-gradient(#d4d0c8 0 1px, #999 1px 2px, #fff 3px 4px, #d4d0c8 4px); }
.sh { width: 38px; margin: 0 0 2.5px 1px; }
.sb { height: 25.65px; display: flex; align-items: center; }
.sb > span { width: 26px; height: 25px; display: flex; align-items: center; justify-content: center; }
.sb > span svg { width: 21px; height: 21px; }
.sb .dd { width: 13px; }
.hs { width: 38px; height: 3px; margin: 2.3px 0 2px 1px; border-top: 1.5px solid #888; border-bottom: 1px solid #fff; }
.zero { width: 41px; height: 26px; border: 2px solid; border-color: #666 #eee #eee #666; color: #888; padding-left: 4px; line-height: 22px; }
.dock { width: 279px; flex: none; height: 1021px; border-right: 2px solid #888; box-shadow: inset -3px 0 #d4d0c8, inset -5px 0 #fff; padding-left: 2px; }
.dh { display: flex; height: 19px; padding: 6px 0 0 2px; }
.dh .hh { width: 247px; }
.min { width: 8px; height: 2px; background: #000; margin: 4px 0 0 11px; }
.nav { width: 270px; height: 307.5px; background: #000; overflow: hidden; }
.split { height: 8px; margin: 0 5px 0 -2px; border-top: 1px solid #888; border-bottom: 2px solid #222; box-shadow: inset 0 3px #e8e6e2; }
.second { height: 20.5px; padding-top: 6px; }
.r1 { display: flex; height: 33px; align-items: center; padding-left: 2px; }
.apply { width: 88px; height: 31px; }
.gear { width: 19px; height: 19px; margin-left: 153px; }
.r2 { display: flex; height: 30px; align-items: center; padding-left: 2px; }
.sun { width: 20px; height: 20px; }
.pct { width: 76px; margin-left: 2px; padding-left: 5px; background: #f6f6f6; }
.lv { margin-left: 58px; width: 44px; }
.spin { width: 64px; background: #f6f6f6; }
.spin em { margin-left: auto; width: 19px; height: 20px; }
.spin em i { height: 10px; background: #d4d0c8; border: 1.5px solid; border-color: #eee #333 #333 #eee; display: flex; align-items: center; justify-content: center; }
.spin em i::before { content: ""; border: 3px solid transparent; border-bottom: 3px solid #000; border-top: 0; }
.spin em i + i::before { border: 3px solid transparent; border-top: 3px solid #999; border-bottom: 0; }
.tabs { display: flex; align-items: flex-end; height: 28px; padding-left: 2px; }
.tab { height: 24px; border: 2px solid; border-color: #f2f0ec #222 transparent #f2f0ec; border-bottom: 0; border-radius: 3px 3px 0 0; line-height: 22px; padding-left: 14px; }
.t1 { width: 88px; height: 27px; line-height: 24px; }
.t2 { width: 81px; }
.t3 { width: 90px; padding-left: 13px; }
.page { width: 265px; height: 541.5px; margin-left: 2px; border: 2px solid; border-color: #f2f0ec #222 #222 #f2f0ec; padding: 3px 0 0 2px; }
.only { height: 27.5px; display: flex; align-items: center; padding-bottom: 8px; }
.only .cb { margin-right: 7px; }
.table { width: 249px; height: 501px; margin-left: 4px; border: 2px solid; border-color: #333 #eee #eee #333; display: flex; background: #fff; overflow: hidden; }
.tbl { width: 227px; flex: none; overflow: hidden; }
.th { display: flex; height: 27px; background: #d4d0c8; }
.th > span { border: 2px solid; border-color: #eee #444 #888 #eee; padding: 2px 0 0 4px; flex: none; }
.th .a { width: 116.5px; }
.th .b { width: 37.3px; }
.th .d { width: 36px; border-right: 0; }
.body { height: 471px; overflow: hidden; }
.tr { display: flex; height: 23.34px; align-items: center; }
.tw { width: 20px; height: 23.34px; }
.tw svg { width: 20px; height: 23.34px; }
.nm { width: 96.5px; }
.ck { width: 37.2px; padding-left: 9px; }
.sw { width: 36px; height: 23.34px; }
.sw svg { width: 36px; height: 23px; }
.ar { width: 18px; height: 18px; background: #d4d0c8; border: 2px solid; border-color: #f4f2ee #222 #222 #f4f2ee; display: flex; align-items: center; justify-content: center; }
.ar::before { content: ""; border: 4px solid transparent; border-top: 5px solid #000; border-bottom: 0; }
.ar.up::before { border: 4px solid transparent; border-bottom: 5px solid #000; border-top: 0; }
.ar.lf::before { border: 4.500px solid transparent; border-right: 5px solid #000; border-left: 0; }
.ar.rt::before { border: 4.500px solid transparent; border-left: 5px solid #000; border-right: 0; }
.vbar { width: 18px; display: flex; flex-direction: column; }
.thumb { height: 290px; background: #d4d0c8; border: 2px solid; border-color: #f4f2ee #333 #222 #f4f2ee; }
.rest { flex: 1; background: #e9e7e3; }
.preset { display: flex; align-items: center; height: 26px; margin-top: 2px; padding-left: 4px; }
.pl { width: 51px; }
.def { width: 153px; }
.p1 { width: 21px; height: 21px; margin-left: 7px; }
.p2 { width: 21px; height: 21px; margin-left: 7px; }
.view { width: 1914px; }
.vrow { display: flex; height: 1001px; }
.canvas { width: 1895px; height: 1001px; background: #000; font-family: "DejaVu Sans", sans-serif; overflow: hidden; }
.names { fill: #d18cef; stroke-linejoin: round; }
.heavy { font-weight: 700; stroke: #d18cef; stroke-width: 5px; }
.semi { stroke: #d18cef; stroke-width: 2.400px; }
.vs2 { width: 19px; display: flex; flex-direction: column; }
.vs2 > i, .hs2 > i { background-color: #d4d0c8; }
.vs2 .t0, .vs2 .t1b, .hs2 .h0, .hs2 .h1 { background: repeating-conic-gradient(#555 0 25%, #b8b6b0 0 50%) 0 0 / 2px 2px; }
.t0 { height: 131px; }
.th2 { height: 703px; border: 2px solid; border-color: #f4f2ee #222 #222 #f4f2ee; }
.t1b { flex: 1; }
.hs2 { display: flex; height: 20px; width: 1895px; border-top: 1px solid #888; }
.hs2 > i { height: 18px; }
.h0 { width: 307px; }
.hth { width: 1246px; border: 2px solid; border-color: #f4f2ee #222 #111 #f4f2ee; }
.h1 { flex: 1; }
.status { height: 33px; flex: none; display: flex; position: relative; padding-top: 2px; border-bottom: 2px solid #f0eeea; }
.status > div:not(.tip) { height: 29px; border: 2px solid; border-color: #888 #f0eeea #f0eeea #888; }
.s1 { width: 1832px; padding: 3px 0 0 2px; overflow: hidden; }
.s2 { width: 168px; margin-left: 1px; padding: 3px 0 0 12px; color: #222; }
.s3 { width: 205px; margin-left: 2px; padding: 1px 0 0 14px; }
.s3 i { width: 185px; height: 24px; border: 2px solid; border-color: #666 #eee #eee #888; }
.s4 { width: 30px; margin-left: 2px; padding: 4px 0 0 3px; }
.s4 svg { width: 19px; height: 18px; }
.tip { position: absolute; left: 427.5px; top: 0; width: 459px; height: 28px; background: #e6f2fc; border: 1.5px solid #8fb4e0; border-radius: 4px; padding: 2px 0 0 8px; }
.tasks { height: 29px; flex: none; display: flex; align-items: center; background: #008000; padding-left: 4px; color: #002400; }
.tasks .grip { opacity: .8; height: 20px; }
.task { width: 99.1px; height: 27px; flex: none; display: flex; align-items: center; padding: 0 0 1px 8px; }
.task svg { width: 18px; height: 19px; margin-right: 8px; }
.task.first { width: 105px; padding-left: 12px; }
.task.on { background: #fdfdfd; border-radius: 4px; border: 1.5px solid #999; width: 98px; padding-left: 7px; margin-right: 1px; color: #222; }
.task.sel { background: linear-gradient(#d8d6d2, #c4c2be); border-radius: 4px; border: 1.5px solid #a8a8a0; padding-left: 9px; color: #111; width: 98px; }
.ws { display: flex; margin-left: auto; height: 29px; background: #aaa8a4; width: 431px; flex: none; }
.ws span { width: 48px; border-left: 1.5px solid #ddd; }
.ws .act { width: 47px; background: #d4e4f8; border: 1.5px solid #e8f0fa; border-top: 2px solid #6080b0; padding: 3px 0 0 13px; }
.ws svg { width: 20px; height: 20px; }
</style>
